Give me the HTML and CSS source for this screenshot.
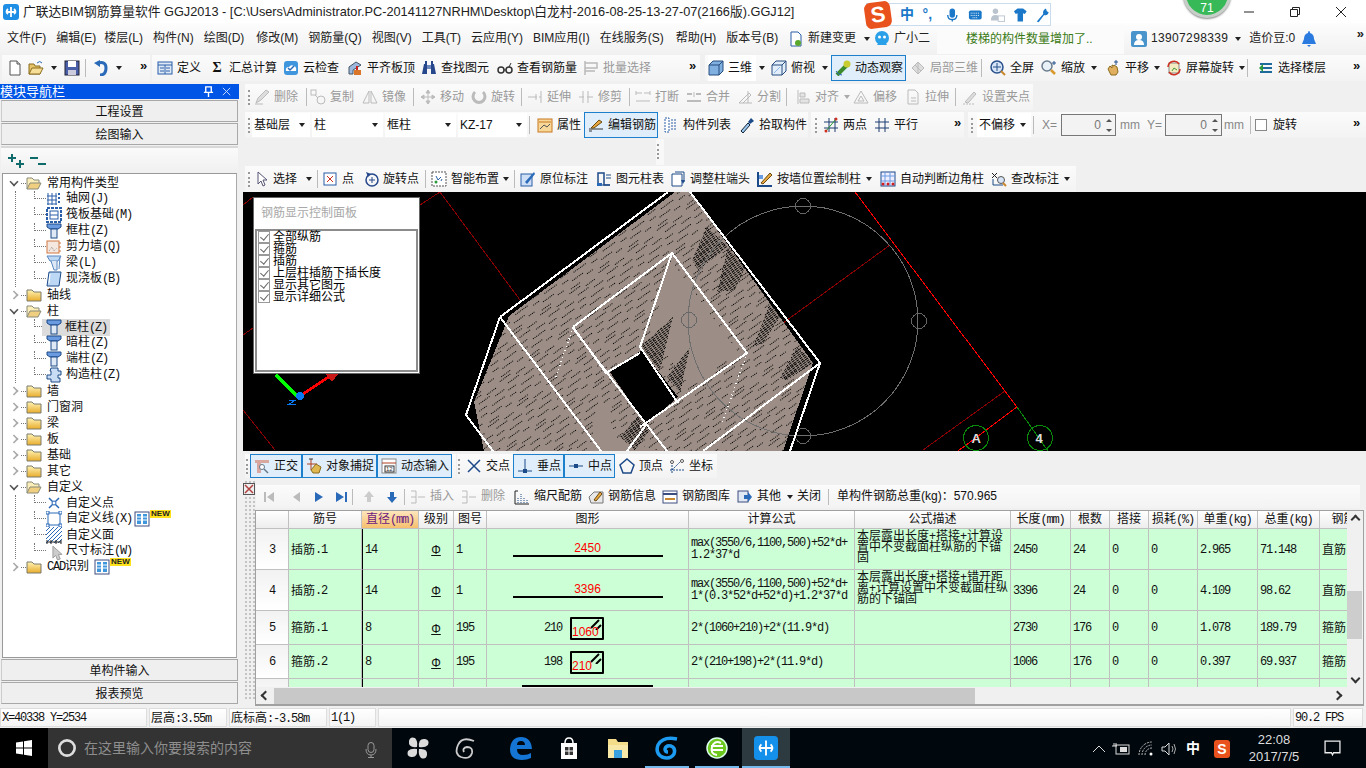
FILE: index.html
```html
<!DOCTYPE html>
<html lang="zh-CN">
<head>
<meta charset="utf-8">
<title>广联达BIM钢筋算量软件 GGJ2013</title>
<link rel="stylesheet" href="styles.css">
</head>
<body>
<svg class="defs" width="0" height="0" aria-hidden="true">
  <defs>
    <linearGradient id="fg" x1="0" y1="0" x2="0" y2="1"><stop offset="0" stop-color="#fff3b4"/><stop offset="1" stop-color="#e8ac2c"/></linearGradient>
    <symbol id="doc" viewBox="0 0 16 16"><path d="M3 1h7l3 3v11H3z" fill="#fff" stroke="#555"/><path d="M10 1v3h3" fill="#ddd" stroke="#555"/></symbol>
    <symbol id="open" viewBox="0 0 16 16"><path d="M1 14V4h5l1 2h5v8z" fill="#e8c468" stroke="#8a6d20"/><path d="M1 14l3-6h11l-3 6z" fill="#f6de96" stroke="#8a6d20"/><path d="M9 3q3-3 5 0" fill="none" stroke="#2a6ab8"/></symbol>
    <symbol id="save" viewBox="0 0 16 16"><rect x="1" y="1" width="14" height="14" fill="#4a5fa8" stroke="#223"/><rect x="4" y="1" width="8" height="6" fill="#fff"/><rect x="4" y="10" width="8" height="5" fill="#ccd"/></symbol>
    <symbol id="undo" viewBox="0 0 16 16"><path d="M5 3q8-2 8 5t-6 7" fill="none" stroke="#2a6ab8" stroke-width="3"/><path d="M1 3l6-3v7z" fill="#2a6ab8"/></symbol>
    <symbol id="def" viewBox="0 0 16 16"><rect x="1" y="2" width="14" height="12" fill="#dfe9f6" stroke="#2a5ea8"/><path d="M1 5h14M3 8h4M3 11h4M9 8h4M9 11h4M8 5v9" stroke="#2a5ea8"/></symbol>
    <symbol id="cloud" viewBox="0 0 16 16"><rect x="1" y="1" width="14" height="14" rx="3" fill="#3f96dc"/><path d="M3 11q-1-4 3-4q2-3 5-1q3 1 2 5z" fill="#fff"/><path d="M5 8l2 2 4-4" fill="none" stroke="#2a6ab8" stroke-width="1.5"/></symbol>
    <symbol id="level" viewBox="0 0 16 16"><path d="M2 14V7l7-5 5 3-8 5v4z" fill="#9cb8dc" stroke="#456"/><rect x="7" y="10" width="7" height="5" fill="#d9762a"/><path d="M10 10V6" stroke="#c22" stroke-width="2"/></symbol>
    <symbol id="binoc" viewBox="0 0 16 16"><path d="M1 14l2-10h3v10zM10 14V4h3l2 10z" fill="#26478c"/><rect x="6" y="5" width="4" height="4" fill="#6f89bd"/><rect x="4" y="1" width="2" height="3" fill="#26478c"/><rect x="10" y="1" width="2" height="3" fill="#26478c"/></symbol>
    <symbol id="glasses" viewBox="0 0 16 16"><circle cx="4" cy="10" r="3" fill="none" stroke="#333" stroke-width="1.5"/><circle cx="12" cy="10" r="3" fill="none" stroke="#333" stroke-width="1.5"/><path d="M7 10h2M12 7l2-4" stroke="#333"/></symbol>
    <symbol id="batch" viewBox="0 0 16 16"><path d="M2 1v14M2 3h12v5H2M2 11h10" fill="none" stroke="#b9b9b9" stroke-width="1.5"/></symbol>
    <symbol id="cube" viewBox="0 0 16 16"><path d="M1 5l4-4h10v10l-4 4H1z" fill="#7fb0e0" stroke="#274d7e"/><path d="M1 5h10v10M11 5l4-4" fill="none" stroke="#274d7e"/></symbol>
    <symbol id="cube2" viewBox="0 0 16 16"><path d="M1 5l4-4h10v10l-4 4H1z" fill="#e2eefa" stroke="#274d7e"/><path d="M1 5h10v10M11 5l4-4" fill="none" stroke="#274d7e"/><path d="M3 13l6-6" stroke="#8fb8e8"/></symbol>
    <symbol id="orbit" viewBox="0 0 16 16"><path d="M2 15L12 5" stroke="#3c8a2c" stroke-width="4"/><circle cx="12" cy="4" r="3.5" fill="#c8cc30"/><path d="M1 11q2 4 6 4" fill="none" stroke="#2a6ab8"/></symbol>
    <symbol id="local" viewBox="0 0 16 16"><path d="M2 8l6-6 6 6-6 6z" fill="#ddd" stroke="#bbb"/><path d="M5 5l6 6M8 2v12" stroke="#bbb"/></symbol>
    <symbol id="full" viewBox="0 0 16 16"><circle cx="7" cy="7" r="6" fill="#d6e4f6" stroke="#27508c" stroke-width="1.5"/><path d="M7 3v8M3 7h8" stroke="#27508c"/><path d="M11 11l4 4" stroke="#c8872c" stroke-width="2"/></symbol>
    <symbol id="zoom" viewBox="0 0 16 16"><circle cx="6" cy="6" r="5" fill="#e8f0f8" stroke="#6c7c90" stroke-width="1.5"/><path d="M10 10l4 4" stroke="#d89a2c" stroke-width="2.5"/><path d="M13 1v4M11 3h4" stroke="#27508c"/></symbol>
    <symbol id="pan" viewBox="0 0 16 16"><path d="M3 9l2-3 2 2V5l2 1v-1l3 2 1 5-2 3H6z" fill="#e0b060" stroke="#8a6d20"/><path d="M11 0v5M9 2h4" stroke="#27508c"/></symbol>
    <symbol id="rot" viewBox="0 0 16 16"><rect x="3" y="3" width="10" height="10" fill="#f4ecc0" stroke="#888"/><path d="M2 7a6 6 0 0 1 11-3M14 9a6 6 0 0 1-11 3" fill="none" stroke="#d03020" stroke-width="1.5"/><path d="M6 11l2-3 3 2" stroke="#3a9a3a" fill="none"/></symbol>
    <symbol id="floors" viewBox="0 0 16 16"><path d="M2 4h12M2 8h12M2 12h12" stroke="#1d6a9c" stroke-width="2"/><path d="M1 8l4-4v8z" fill="#2a9a3a"/></symbol>
    <symbol id="del" viewBox="0 0 16 16"><path d="M2 14l2-5 8-8 3 2-8 8z" fill="#ddd" stroke="#bbb"/><path d="M1 15h8" stroke="#bbb"/></symbol>
    <symbol id="copy" viewBox="0 0 16 16"><rect x="1" y="1" width="5" height="5" fill="none" stroke="#bbb"/><circle cx="11" cy="11" r="4" fill="none" stroke="#bbb"/><path d="M5 6l3 3" stroke="#bbb"/></symbol>
    <symbol id="mirror" viewBox="0 0 16 16"><path d="M7 2L1 14h6zM9 2l6 12H9z" fill="none" stroke="#bbb"/></symbol>
    <symbol id="move" viewBox="0 0 16 16"><path d="M8 1v14M1 8h14M8 1L6 4h4zM8 15l-2-3h4zM1 8l3-2v4zM15 8l-3-2v4z" fill="#bbb" stroke="#bbb"/></symbol>
    <symbol id="rotate" viewBox="0 0 16 16"><path d="M4 3a6 6 0 1 0 8 0" fill="none" stroke="#bbb" stroke-width="3"/></symbol>
    <symbol id="extend" viewBox="0 0 16 16"><path d="M1 8h9M12 8h2M14 2v12M9 5v6" stroke="#bbb" fill="none"/></symbol>
    <symbol id="trim" viewBox="0 0 16 16"><path d="M1 8h5M9 8h6M5 2v12M10 2v12" stroke="#bbb" fill="none"/></symbol>
    <symbol id="brk" viewBox="0 0 16 16"><path d="M1 4h6M9 4h6M1 12h14M1 2v4M15 2v4" stroke="#bbb" fill="none"/></symbol>
    <symbol id="merge" viewBox="0 0 16 16"><path d="M1 5h5M10 5h5M1 12h14" stroke="#bbb" stroke-width="2"/><path d="M8 3v5" stroke="#bbb"/></symbol>
    <symbol id="split" viewBox="0 0 16 16"><path d="M2 14h13M2 14l10-10 2 2-8 8M11 2v12" fill="none" stroke="#bbb"/></symbol>
    <symbol id="align" viewBox="0 0 16 16"><path d="M3 1v14M5 4h5v4H5zM5 10h9v4H5z" fill="#e4e4e4" stroke="#bbb"/></symbol>
    <symbol id="offs" viewBox="0 0 16 16"><path d="M1 14L8 2l7 12zM5 12l3-5 3 5z" fill="none" stroke="#bbb"/></symbol>
    <symbol id="stre" viewBox="0 0 16 16"><path d="M3 1h7l3 3v11H3zM6 9h5M6 12h5" fill="none" stroke="#bbb"/></symbol>
    <symbol id="gripset" viewBox="0 0 16 16"><path d="M3 13L12 3l2 2-8 9z" fill="#ddd" stroke="#bbb"/><path d="M1 15h12" stroke="#bbb" stroke-dasharray="2 1"/></symbol>
    <symbol id="attr" viewBox="0 0 16 16"><rect x="1" y="2" width="14" height="13" fill="#f8d898" stroke="#c87820"/><path d="M2 5h12" stroke="#c87820"/><path d="M3 12l4-4 3 2 3-3" fill="none" stroke="#555"/></symbol>
    <symbol id="edit" viewBox="0 0 16 16"><path d="M1 12h14" stroke="#333"/><path d="M3 11l8-8 3 2-8 6z" fill="#e8a840" stroke="#6a4a10"/><path d="M1 14h3" stroke="#333"/></symbol>
    <symbol id="list" viewBox="0 0 16 16"><path d="M2 1h4v14H2zM8 3h6M8 6h6M8 9h6M8 12h6" fill="#fff" stroke="#2a5ea8" stroke-dasharray="2 1"/></symbol>
    <symbol id="pick" viewBox="0 0 16 16"><path d="M2 14L9 6l2 2-7 8z" fill="#9cc8f0" stroke="#123"/><path d="M9 5l3-4 3 3-4 3z" fill="#1d4a88"/></symbol>
    <symbol id="two" viewBox="0 0 16 16"><path d="M6 1v14M12 1v14M1 5h14M1 11h14" stroke="#1c3c70" fill="none"/><path d="M3 14L13 2" stroke="#2a9a3a"/><circle cx="3" cy="14" r="1.5" fill="#d03020"/><circle cx="13" cy="2" r="1.5" fill="#d03020"/></symbol>
    <symbol id="par" viewBox="0 0 16 16"><path d="M5 1v14M11 1v14M1 5h14M1 11h14" stroke="#1c3c70" fill="none"/></symbol>
    <symbol id="cur" viewBox="0 0 16 16"><path d="M5 1v12l3-3 2 5 2-1-2-5h4z" fill="#fff" stroke="#557"/></symbol>
    <symbol id="pt" viewBox="0 0 16 16"><rect x="2" y="2" width="12" height="12" fill="#fff" stroke="#2a5ea8"/><path d="M5 5l6 6M11 5l-6 6" stroke="#d03020"/></symbol>
    <symbol id="rotpt" viewBox="0 0 16 16"><circle cx="9" cy="9" r="6" fill="none" stroke="#26478c" stroke-width="1.5"/><path d="M9 6v6M6 9h6" stroke="#26478c"/><path d="M3 1l2 5 3-3z" fill="#26478c"/></symbol>
    <symbol id="smart" viewBox="0 0 16 16"><rect x="1" y="1" width="14" height="14" fill="#fff" stroke="#555" stroke-dasharray="2 1"/><path d="M5 5l2 4 3-3M10 10l1-2" fill="none" stroke="#2a5ea8"/><circle cx="5" cy="11" r="1.5" fill="#2a9a3a"/></symbol>
    <symbol id="mark" viewBox="0 0 16 16"><rect x="1" y="3" width="11" height="12" fill="#cfe0f6" stroke="#2a5ea8"/><path d="M5 11L14 1l1 2-8 10z" fill="#2a6ab8"/></symbol>
    <symbol id="ctable" viewBox="0 0 16 16"><path d="M2 14V2h6v12h6" fill="none" stroke="#1d4a88" stroke-width="1.5"/><path d="M10 4h5M10 7h5M2 14h12" stroke="#1d4a88"/><rect x="1" y="12" width="5" height="3" fill="#2a6ab8"/></symbol>
    <symbol id="adj" viewBox="0 0 16 16"><path d="M2 3h10v12H2z" fill="#fff" stroke="#1d4a88"/><path d="M5 1h9v10" fill="none" stroke="#1d4a88"/><path d="M15 9l-2 4-2-4z" fill="#1d4a88"/></symbol>
    <symbol id="wall" viewBox="0 0 16 16"><path d="M1 1v14h14" fill="none" stroke="#1d4a88" stroke-width="2"/><path d="M4 12L13 2l2 2-9 9z" fill="#e8a840" stroke="#6a4a10"/><rect x="2" y="4" width="4" height="4" fill="#6a9ae0"/></symbol>
    <symbol id="auto" viewBox="0 0 16 16"><rect x="1" y="1" width="14" height="14" fill="#eef" stroke="#1d4a88"/><path d="M1 5h14M1 10h14M5 1v14M10 1v14" stroke="#6a9ae0"/><circle cx="3" cy="13" r="1.5" fill="#d02020"/><circle cx="13" cy="13" r="1.5" fill="#d02020"/><circle cx="8" cy="13" r="1.5" fill="#d02020"/></symbol>
    <symbol id="chk" viewBox="0 0 16 16"><path d="M1 2l5 5M6 2L1 7" stroke="#222"/><path d="M2 14V8M12 14H2" stroke="#1d4a88"/><circle cx="10" cy="9" r="3.5" fill="#d6e4f6" stroke="#555"/><path d="M12 12l3 3" stroke="#c8872c" stroke-width="2"/></symbol>
    <symbol id="ortho" viewBox="0 0 16 16"><path d="M1 2h14v3H7v10H3V5H1z" fill="#d8a8a0"/><circle cx="8" cy="9" r="2.5" fill="#fff" stroke="#678"/><path d="M10 11l4 4" stroke="#678" stroke-width="1.5"/></symbol>
    <symbol id="obj" viewBox="0 0 16 16"><path d="M5 1v11M1 6h10" stroke="#b04020"/><path d="M3 1h4" stroke="#333"/><path d="M5 12l5-6 5 3-2 6H7z" fill="#e0b850" stroke="#8a6d20"/></symbol>
    <symbol id="dyn" viewBox="0 0 16 16"><rect x="1" y="1" width="14" height="14" fill="#fff" stroke="#888"/><path d="M1 5h14" stroke="#b04020"/><rect x="4" y="8" width="9" height="6" fill="#fff" stroke="#333"/><text x="5" y="13" font-size="6" fill="#333" font-family="Liberation Sans">12</text></symbol>
    <symbol id="cross" viewBox="0 0 16 16"><path d="M2 2l12 12M14 2L2 14" stroke="#1d4a88" stroke-width="1.5"/></symbol>
    <symbol id="perp" viewBox="0 0 16 16"><path d="M1 13h14M8 1v12" stroke="#1d4a88"/><rect x="6" y="11" width="4" height="4" fill="#1d4a88"/></symbol>
    <symbol id="mid" viewBox="0 0 16 16"><path d="M1 8h14" stroke="#1d4a88"/><rect x="6" y="6" width="4" height="4" fill="#1d4a88"/></symbol>
    <symbol id="vert" viewBox="0 0 16 16"><path d="M8 1l7 6-3 8H4L1 7z" fill="none" stroke="#1d4a88" stroke-width="1.5"/></symbol>
    <symbol id="coord" viewBox="0 0 16 16"><path d="M3 15V4M1 12h14M3 12l9-9" stroke="#1d4a88" stroke-dasharray="2 1"/><circle cx="3" cy="4" r="1.5" fill="#fff" stroke="#555"/><circle cx="13" cy="3" r="1.5" fill="#fff" stroke="#555"/></symbol>
    <symbol id="first" viewBox="0 0 16 16"><path d="M3 3h2v10H3zM13 3v10L6 8z" fill="#bbb"/></symbol>
    <symbol id="prev" viewBox="0 0 16 16"><path d="M12 3v10L5 8z" fill="#bbb"/></symbol>
    <symbol id="next" viewBox="0 0 16 16"><path d="M4 3v10l8-5z" fill="#2a6ab8"/></symbol>
    <symbol id="last" viewBox="0 0 16 16"><path d="M2 3v10l8-5zM11 3h2v10h-2z" fill="#2a6ab8"/></symbol>
    <symbol id="up" viewBox="0 0 16 16"><path d="M8 2l5 6h-3v5H6V8H3z" fill="#ccc"/></symbol>
    <symbol id="down" viewBox="0 0 16 16"><path d="M8 14l5-6h-3V3H6v5H3z" fill="#2a6ab8"/></symbol>
    <symbol id="ins" viewBox="0 0 16 16"><path d="M1 2h5M1 8h5M1 14h5M6 2v12M8 8h7" fill="none" stroke="#bbb"/></symbol>
    <symbol id="scale" viewBox="0 0 16 16"><path d="M1 15V2l3 0M1 15h14" fill="none" stroke="#222"/><path d="M4 14V8M7 14V5M10 14V9M13 14V11" stroke="#1d4a88" stroke-dasharray="1 1"/></symbol>
    <symbol id="info" viewBox="0 0 16 16"><path d="M1 8l5-5h9v11H3z" fill="#e8e8e8" stroke="#777"/><path d="M6 11l6-8 2 2-6 7z" fill="#e8a840" stroke="#6a4a10"/></symbol>
    <symbol id="lib" viewBox="0 0 16 16"><rect x="1" y="2" width="14" height="12" fill="#fff" stroke="#3c4c80"/><path d="M1 5h14" stroke="#3c4c80" stroke-width="2"/><path d="M3 10h10" stroke="#c8872c" stroke-width="2"/></symbol>
    <symbol id="other" viewBox="0 0 16 16"><rect x="1" y="2" width="10" height="11" fill="#e0e8f4" stroke="#3c4c80"/><path d="M7 6h4V3l4 5-4 5v-3H7z" fill="#2a6ab8"/></symbol>
    <symbol id="fold" viewBox="0 0 16 16"><path d="M1 14V3h5l2 2h7v9z" fill="url(#fg)" stroke="#7a7a6a"/></symbol>
    <symbol id="foldo" viewBox="0 0 16 16"><path d="M1 14V3h5l2 2h5v3" fill="#fbeeb8" stroke="#8a8a7a"/><path d="M1 14l3-6h11l-3 6z" fill="#f0d080" stroke="#8a8a7a"/></symbol>
    <symbol id="gridi" viewBox="0 0 16 16"><path d="M2 2v12M6 2v12M10 2v12M1 5h10M1 9h10M1 13h10" stroke="#2a5ea8"/><path d="M13 2v12" stroke="#2a5ea8" stroke-dasharray="2 2" stroke-width="2"/></symbol>
    <symbol id="raft" viewBox="0 0 16 16"><rect x="1" y="1" width="14" height="14" fill="none" stroke="#2a5ea8" stroke-width="2" stroke-dasharray="3 1"/><rect x="4" y="4" width="8" height="8" fill="none" stroke="#2a5ea8"/><path d="M4 8h8" stroke="#2a5ea8"/></symbol>
    <symbol id="col" viewBox="0 0 16 16"><path d="M1 1h14v3l-3 2H4L1 4z" fill="#6a9ae0" stroke="#1d4a88"/><rect x="5" y="6" width="6" height="9" fill="#dfe9f6" stroke="#1d4a88"/></symbol>
    <symbol id="shear" viewBox="0 0 16 16"><rect x="1" y="2" width="12" height="12" fill="#f4e8e0" stroke="#d07840"/><path d="M3 12l3-4 2 4 3-3" fill="none" stroke="#999" stroke-dasharray="1 1"/><path d="M13 4h2M13 8h2M13 12h2" stroke="#d07840"/></symbol>
    <symbol id="beam" viewBox="0 0 16 16"><path d="M1 1h14l-3 5H4z" fill="#bcd8f4" stroke="#5a88c0"/><path d="M5 6l3 9h3V6" fill="#dfe9f6" stroke="#5a88c0"/><path d="M14 2l-1 12" stroke="#5a88c0"/></symbol>
    <symbol id="slab" viewBox="0 0 16 16"><path d="M3 1h12l-2 14H1z" fill="#bcd8f4" stroke="#1d4a88"/><path d="M4 3l-1 9" stroke="#fff"/></symbol>
    <symbol id="cons" viewBox="0 0 16 16"><path d="M5 1h7v3h3v4h-3v3h2v4H5v-3H1V8h4V4H4z" fill="#c8dcf4" stroke="#1d4a88"/></symbol>
    <symbol id="xpt" viewBox="0 0 16 16"><path d="M3 3l10 10M13 3L3 13" stroke="#2a6ab8" stroke-width="1.5"/><circle cx="8" cy="8" r="2" fill="#fff" stroke="#2a6ab8"/></symbol>
    <symbol id="xline" viewBox="0 0 16 16"><rect x="2" y="2" width="12" height="12" fill="none" stroke="#2a6ab8"/><rect x="0" y="0" width="3" height="3" fill="#fff" stroke="#2a6ab8"/><rect x="13" y="0" width="3" height="3" fill="#fff" stroke="#2a6ab8"/><rect x="0" y="13" width="3" height="3" fill="#fff" stroke="#2a6ab8"/><rect x="13" y="13" width="3" height="3" fill="#fff" stroke="#2a6ab8"/></symbol>
    <symbol id="xface" viewBox="0 0 16 16"><path d="M0 4L4 0M0 8l8-8M0 12L12 0M0 16L16 0M4 16L16 4M8 16l8-8M12 16l4-4" stroke="#2a6ab8"/></symbol>
    <symbol id="dim" viewBox="0 0 16 16"><path d="M1 1v4M15 1v4M1 3h14" stroke="#222"/><path d="M5 1v4M10 1v4" stroke="#222"/></symbol>
    <symbol id="book" viewBox="0 0 16 16"><rect x="1" y="1" width="14" height="14" fill="#fff" stroke="#3c4c80"/><rect x="3" y="3" width="4" height="10" fill="#3f96dc"/><rect x="9" y="3" width="4" height="10" fill="#3f96dc"/><path d="M3 6h4M3 9h4M9 6h4M9 9h4" stroke="#fff"/></symbol>
    <symbol id="logo" viewBox="0 0 16 16"><rect width="16" height="16" rx="3" fill="#1f8fe6"/><path d="M8 3v10M3 8h10M5 5q-3 3 0 5M11 5q3 3 0 5" fill="none" stroke="#fff" stroke-width="1.8"/></symbol>
  </defs>
</svg>

<div class="app">
  <header class="titlebar">
    <svg class="i logo"><use href="#logo"/></svg>
    <span class="title">广联达BIM钢筋算量软件 GGJ2013 - [C:\Users\Administrator.PC-20141127NRHM\Desktop\白龙村-2016-08-25-13-27-07(2166版).GGJ12]</span>
    <div class="sogou">
      <span class="s-logo">S</span>
      <span class="s-item">中</span>
      <span class="s-item">°,</span>
      <svg class="s-ic" viewBox="0 0 16 16"><rect x="5" y="1" width="6" height="10" rx="3" fill="#1b78c8"/><path d="M3 8q0 5 5 5t5-5M8 13v2" fill="none" stroke="#1b78c8" stroke-width="1.5"/></svg>
      <svg class="s-ic" viewBox="0 0 16 16"><rect x="1" y="3" width="14" height="10" rx="2" fill="#1b78c8"/><path d="M3 6h10M3 8.500h10M5 11h6" stroke="#fff" stroke-dasharray="1 1"/></svg>
      <svg class="s-ic" viewBox="0 0 16 16"><circle cx="6" cy="4" r="3" fill="#bac4cf"/><path d="M1 14q0-6 5-6t4 6z" fill="#bac4cf"/><rect x="9" y="9" width="7" height="6" fill="#fff" stroke="#bac4cf"/></svg>
      <svg class="s-ic" viewBox="0 0 16 16"><path d="M5 1h6l4 3-2 3-2-1v9H5V6L3 7 1 4z" fill="#1b78c8"/></svg>
      <svg class="s-ic" viewBox="0 0 16 16"><path d="M2 15l7-8q-1-4 3-6l1 3 2 1q-1 4-5 3l-6 8z" fill="#1b78c8"/></svg>
    </div>
    <div class="score">71</div>
    <div class="winbtns">
      <svg viewBox="0 0 12 12"><path d="M1 6h10" stroke="#222"/></svg>
      <svg viewBox="0 0 12 12"><path d="M1.500 3.500h7v7h-7zM3.500 3.500v-2h7v7h-2" fill="none" stroke="#222"/></svg>
      <svg viewBox="0 0 12 12"><path d="M1 1l10 10M11 1L1 11" stroke="#222"/></svg>
    </div>
  </header>

  <nav class="menubar">
    <div class="menus">
      <span>文件(F)</span><span>编辑(E)</span><span>楼层(L)</span><span>构件(N)</span><span>绘图(D)</span><span>修改(M)</span><span>钢筋量(Q)</span><span>视图(V)</span><span>工具(T)</span><span>云应用(Y)</span><span>BIM应用(I)</span><span>在线服务(S)</span><span>帮助(H)</span><span>版本号(B)</span>
    </div>
    <div class="t m-new"><svg class="i" viewBox="0 0 16 16"><path d="M3 1h7l3 3v11H3z" fill="#fff" stroke="#2a5ea8"/><circle cx="10" cy="12" r="3" fill="#5aa82c"/></svg>新建变更<i class="ar"></i></div>
    <div class="t m-xiao"><svg class="i" viewBox="0 0 16 16"><circle cx="8" cy="7" r="7" fill="#2aa0e8"/><circle cx="5.500" cy="6" r="1.500" fill="#fff"/><circle cx="10.500" cy="6" r="1.500" fill="#fff"/><path d="M3 14l2-3h6l2 3z" fill="#2aa0e8"/></svg>广小二</div>
    <div class="m-news">楼梯的构件数量增加了..</div>
    <div class="m-user">
      <svg class="i" viewBox="0 0 16 16"><rect width="16" height="16" rx="2" fill="#4a94cc"/><circle cx="8" cy="6" r="3" fill="#fff"/><path d="M3 14q0-5 5-5t5 5z" fill="#fff"/></svg>
      <span class="phone">13907298339</span><i class="ar"></i><span class="dou">造价豆:0</span>
      <svg class="i bell" viewBox="0 0 16 16"><path d="M8 0q-1 0-1 2-4 1-4 6l-2 5h14l-2-5q0-5-4-6 0-2-1-2zM6 14h4l-2 2z" fill="#2a7ae0"/></svg>
    </div>
    <span class="more m-more">»</span>
  </nav>

  <div class="toolrow">
    <div class="bar bar-a">
      <span class="t"><svg class="i"><use href="#doc"/></svg></span>
      <span class="t"><svg class="i"><use href="#open"/></svg></span>
      <i class="ar"></i>
      <span class="t"><svg class="i"><use href="#save"/></svg></span>
      <i class="sp"></i>
      <span class="t"><svg class="i"><use href="#undo"/></svg></span>
      <i class="ar"></i>
      <span class="more up">»</span>
    </div>
    <div class="bar bar-b">
      <span class="t"><svg class="i"><use href="#def"/></svg>定义</span>
      <span class="t"><b class="sigma">Σ</b>汇总计算</span>
      <span class="t"><svg class="i"><use href="#cloud"/></svg>云检查</span>
      <span class="t"><svg class="i"><use href="#level"/></svg>平齐板顶</span>
      <span class="t"><svg class="i"><use href="#binoc"/></svg>查找图元</span>
      <span class="t"><svg class="i"><use href="#glasses"/></svg>查看钢筋量</span>
      <span class="t off"><svg class="i"><use href="#batch"/></svg>批量选择</span>
      <span></span>
      <span class="more up">»</span>
    </div>
    <div class="bar bar-c">
      <span class="t wt"><svg class="i"><use href="#cube"/></svg>三维</span>
      <i class="ar"></i>
      <span class="t"><svg class="i"><use href="#cube2"/></svg>俯视</span>
      <i class="ar"></i>
      <span class="t hl"><svg class="i"><use href="#orbit"/></svg>动态观察</span>
      <span class="t off pl4"><svg class="i"><use href="#local"/></svg>局部三维</span>
      <i class="sp"></i>
      <span class="t"><svg class="i"><use href="#full"/></svg>全屏</span>
      <span class="t"><svg class="i"><use href="#zoom"/></svg>缩放</span>
      <i class="ar"></i>
      <span class="t"><svg class="i"><use href="#pan"/></svg>平移</span>
      <i class="ar"></i>
      <span class="t"><svg class="i"><use href="#rot"/></svg>屏幕旋转</span>
      <i class="ar"></i>
      <i class="sp"></i>
      <span class="t"><svg class="i"><use href="#floors"/></svg>选择楼层</span>
      <span></span>
      <span class="more up">»</span>
    </div>
  </div>

  <main class="main">
    <aside class="nav">
      <div class="nav-head"><span>模块导航栏</span>
        <svg class="nav-ic" viewBox="0 0 12 12"><path d="M3 1h6v6H3zM1 7h10M6 7v5" fill="none" stroke="#fff" stroke-width="1.500"/></svg>
        <svg class="nav-ic" viewBox="0 0 12 12"><path d="M2 2l8 8M10 2l-8 8" stroke="#cfe0ff"/></svg>
      </div>
      <div class="nav-btn">工程设置</div>
      <div class="nav-btn">绘图输入</div>
      <div class="nav-panel">
        <div class="nav-tools">
          <svg class="pm" viewBox="0 0 18 16"><path d="M5 1v8M1 5h8M13 7v8M9 11h8" stroke="#0f6a6a" stroke-width="2"/></svg>
          <svg class="pm" viewBox="0 0 18 16"><path d="M1 5h8M9 11h8" stroke="#0f6a6a" stroke-width="2"/></svg>
        </div>
        <div class="tree">
          <div class="grp"><i class="chev dn"></i><i class="stub"></i><svg class="i"><use href="#foldo"/></svg><span>常用构件类型</span></div>
          <div class="kids">
            <div class="kid"><i class="elbow"></i><svg class="i"><use href="#gridi"/></svg><span>轴网<span class="m">(J)</span></span></div>
            <div class="kid"><i class="elbow"></i><svg class="i"><use href="#raft"/></svg><span>筏板基础<span class="m">(M)</span></span></div>
            <div class="kid"><i class="elbow"></i><svg class="i"><use href="#col"/></svg><span>框柱<span class="m">(Z)</span></span></div>
            <div class="kid"><i class="elbow"></i><svg class="i"><use href="#shear"/></svg><span>剪力墙<span class="m">(Q)</span></span></div>
            <div class="kid"><i class="elbow"></i><svg class="i"><use href="#beam"/></svg><span>梁<span class="m">(L)</span></span></div>
            <div class="kid"><i class="elbow"></i><svg class="i"><use href="#slab"/></svg><span>现浇板<span class="m">(B)</span></span></div>
          </div>
          <div class="grp"><i class="chev"></i><i class="stub"></i><svg class="i"><use href="#fold"/></svg><span>轴线</span></div>
          <div class="grp"><i class="chev dn"></i><i class="stub"></i><svg class="i"><use href="#foldo"/></svg><span>柱</span></div>
          <div class="kids">
            <div class="kid"><i class="elbow"></i><svg class="i"><use href="#col"/></svg><span class="sel">框柱<span class="m">(Z)</span></span></div>
            <div class="kid"><i class="elbow"></i><svg class="i"><use href="#col"/></svg><span>暗柱<span class="m">(Z)</span></span></div>
            <div class="kid"><i class="elbow"></i><svg class="i"><use href="#col"/></svg><span>端柱<span class="m">(Z)</span></span></div>
            <div class="kid"><i class="elbow"></i><svg class="i"><use href="#cons"/></svg><span>构造柱<span class="m">(Z)</span></span></div>
          </div>
          <div class="grp"><i class="chev"></i><i class="stub"></i><svg class="i"><use href="#fold"/></svg><span>墙</span></div>
          <div class="grp"><i class="chev"></i><i class="stub"></i><svg class="i"><use href="#fold"/></svg><span>门窗洞</span></div>
          <div class="grp"><i class="chev"></i><i class="stub"></i><svg class="i"><use href="#fold"/></svg><span>梁</span></div>
          <div class="grp"><i class="chev"></i><i class="stub"></i><svg class="i"><use href="#fold"/></svg><span>板</span></div>
          <div class="grp"><i class="chev"></i><i class="stub"></i><svg class="i"><use href="#fold"/></svg><span>基础</span></div>
          <div class="grp"><i class="chev"></i><i class="stub"></i><svg class="i"><use href="#fold"/></svg><span>其它</span></div>
          <div class="grp"><i class="chev dn"></i><i class="stub"></i><svg class="i"><use href="#foldo"/></svg><span>自定义</span></div>
          <div class="kids">
            <div class="kid"><i class="elbow"></i><svg class="i"><use href="#xpt"/></svg><span>自定义点</span></div>
            <div class="kid"><i class="elbow"></i><svg class="i"><use href="#xline"/></svg><span>自定义线<span class="m">(X)</span></span><svg class="i bk"><use href="#book"/></svg><b class="new">NEW</b></div>
            <div class="kid"><i class="elbow"></i><svg class="i"><use href="#xface"/></svg><span>自定义面</span></div>
            <div class="kid"><i class="elbow"></i><svg class="i dimi"><use href="#dim"/></svg><span>尺寸标注<span class="m">(W)</span></span><svg class="mouse" viewBox="0 0 12 16"><path d="M1 0v13l3-3 2 5 3-1-2-5h4z" fill="#ccc" stroke="#999"/></svg></div>
          </div>
          <div class="grp"><i class="chev"></i><i class="stub"></i><svg class="i"><use href="#fold"/></svg><span><span class="m">CAD</span>识别</span><svg class="i bk2"><use href="#book"/></svg><b class="new">NEW</b></div>
        </div>
      </div>
      <div class="nav-btn">单构件输入</div>
      <div class="nav-btn">报表预览</div>
    </aside>

    <section class="work">
      <div class="barrow lower">
        <div class="bar bar-edit off">
          <i class="g"></i>
          <span class="t"><svg class="i"><use href="#del"/></svg>删除</span>
          <i class="sp"></i>
          <span class="t"><svg class="i"><use href="#copy"/></svg>复制</span>
          <span class="t"><svg class="i"><use href="#mirror"/></svg>镜像</span>
          <i class="sp"></i>
          <span class="t"><svg class="i"><use href="#move"/></svg>移动</span>
          <span class="t"><svg class="i"><use href="#rotate"/></svg>旋转</span>
          <i class="sp"></i>
          <span class="t"><svg class="i"><use href="#extend"/></svg>延伸</span>
          <span class="t"><svg class="i"><use href="#trim"/></svg>修剪</span>
          <i class="sp"></i>
          <span class="t"><svg class="i"><use href="#brk"/></svg>打断</span>
          <span class="t"><svg class="i"><use href="#merge"/></svg>合并</span>
          <span class="t"><svg class="i"><use href="#split"/></svg>分割</span>
          <i class="sp"></i>
          <span class="t"><svg class="i"><use href="#align"/></svg>对齐</span>
          <i class="ar gray"></i>
          <span class="t"><svg class="i"><use href="#offs"/></svg>偏移</span>
          <span class="t"><svg class="i"><use href="#stre"/></svg>拉伸</span>
          <i class="sp"></i>
          <span class="t"><svg class="i"><use href="#gripset"/></svg>设置夹点</span>
        </div>
      </div>
      <div class="barrow lower">
        <div class="bar bar-sel1">
          <i class="g"></i>
          <span class="combo">基础层<i class="ar"></i></span>
          <span class="combo">柱<i class="ar"></i></span>
          <span class="combo">框柱<i class="ar"></i></span>
          <span class="combo">KZ-17<i class="ar"></i></span>
          <i class="sp"></i>
          <span class="t"><svg class="i"><use href="#attr"/></svg>属性</span>
          <span class="t hl"><svg class="i"><use href="#edit"/></svg>编辑钢筋</span>
          <span class="t pl5"><svg class="i"><use href="#list"/></svg>构件列表</span>
          <span class="t pl5"><svg class="i"><use href="#pick"/></svg>拾取构件</span>
        </div>
        <div class="bar bar-sel2">
          <i class="g"></i>
          <span class="t"><svg class="i"><use href="#two"/></svg>两点</span>
          <span class="t"><svg class="i"><use href="#par"/></svg>平行</span>
          <span></span>
          <span class="more up">»</span>
        </div>
        <div class="bar bar-sel3">
          <i class="g"></i>
          <span class="combo">不偏移<i class="ar"></i></span>
          <i class="sp"></i>
          <span class="lab">X=</span>
          <span class="spin">0<i class="spinb"><i class="tri-u"></i><i class="tri-d"></i></i></span>
          <span class="lab pl3">mm</span>
          <span class="lab">Y=</span>
          <span class="spin">0<i class="spinb"><i class="tri-u"></i><i class="tri-d"></i></i></span>
          <span class="lab pl1">mm</span>
          <i class="sp"></i>
          <i class="cbx"></i>
          <span>旋转</span>
          <span class="more up">»</span>
        </div>
      </div>
      <div class="barrow3"><div class="tiny"><i class="g"></i></div></div>
      <div class="barrow">
        <div class="bar bar-draw">
          <i class="g"></i>
          <span class="t"><svg class="i"><use href="#cur"/></svg>选择</span>
          <i class="ar"></i>
          <i class="sp"></i>
          <span class="t"><svg class="i"><use href="#pt"/></svg>点</span>
          <span class="t"><svg class="i"><use href="#rotpt"/></svg>旋转点</span>
          <i class="sp"></i>
          <span class="t"><svg class="i"><use href="#smart"/></svg>智能布置</span>
          <i class="ar"></i>
          <i class="sp"></i>
          <span class="t"><svg class="i"><use href="#mark"/></svg>原位标注</span>
          <span class="t"><svg class="i"><use href="#ctable"/></svg>图元柱表</span>
          <span class="t"><svg class="i"><use href="#adj"/></svg>调整柱端头</span>
          <span class="t"><svg class="i"><use href="#wall"/></svg>按墙位置绘制柱</span>
          <i class="ar"></i>
          <span class="t"><svg class="i"><use href="#auto"/></svg>自动判断边角柱</span>
          <span class="t"><svg class="i"><use href="#chk"/></svg>查改标注</span>
          <i class="ar"></i>
        </div>
      </div>

      <div class="canvas">
        <svg class="scene" viewBox="243 192 1123 259" width="1123" height="259">
          <defs>
            <pattern id="sparse" width="36" height="30" patternUnits="userSpaceOnUse" patternTransform="rotate(-36)">
              <path d="M0 2.500H14M18 5.500H30M6 8.500H20M24 11.500H36M2 14.500H12M16 17.500H32M0 20.500H8M10 23.500H24M26 26.500H34M4 29.500H16" stroke="#000" stroke-dasharray="1 1" fill="none"/>
            </pattern>
            <pattern id="dense" width="4" height="2" patternUnits="userSpaceOnUse" patternTransform="rotate(-36)">
              <rect width="3" height="1" fill="#000"/>
            </pattern>
            <pattern id="mid" width="24" height="12" patternUnits="userSpaceOnUse" patternTransform="rotate(-36)">
              <path d="M0 1.500H20M2 3.500H18M6 5.500H24M0 7.500H12M8 9.500H22M0 11.500H16" stroke="#000" stroke-dasharray="1 1" fill="none"/>
            </pattern>
          </defs>
          <g class="red-d">
            <path d="M243 205L253 197M243 335L253 328M243 410L275 450M420 205L440 192L520 300M757 342L890 245M1005 391L923 450"/>
          </g>
          <path class="tan" d="M509 316L675 192H690L813 363L783 451H484L474 402L505 326Z"/>
          <path class="h-sparse" d="M509 316L675 192H690L813 363L783 451H484L474 402L505 326Z"/>
          <path class="tan" d="M672 262L738 352L692 386L650 335ZM600 395L618 440L660 451H590Z"/>
          <path class="h-mid" d="M520 312L620 238L650 250L560 325ZM630 226L672 195L680 235L645 265ZM590 262L620 240L628 280L600 300Z"/>
          <path class="h-dense" d="M692 260L707 227L728 247L698 270ZM717 292L728 247L745 268L735 290ZM753 347L770 303L780 317L763 343ZM780 378L797 347L813 363L787 380ZM667 377L690 347L680 393ZM640 347L673 317L660 370ZM620 437L643 410L650 430L635 450Z"/>
          <path class="hole" d="M610 372L642 350L678 397L646 425Z"/>
          <path class="ln-grey" d="M918 321A115 115 0 1 1 688 321A115 115 0 1 1 918 321Z"/>
          <circle class="ln-grey2" cx="803" cy="206" r="7.500"/><circle class="ln-grey2" cx="919" cy="321" r="7.500"/><circle class="ln-grey2" cx="803" cy="436" r="7.500"/><circle class="ln-grey2" cx="689" cy="320" r="7.500"/>
          <path class="ln-w" d="M500 317L668 192M690 192L820 363L790 451M500 317L466 415L493 451M500 317L601 451M573 327L672 253L747 353L640 427M573 328L643 420L667 451M672 253L640 347L678 403M820 363L703 451M573 327L606 373L640 353M646 425L627 451"/>
          <path class="ln-wd" d="M573 327L556 377M747 353L722 423"/>
          <path class="ln-r" d="M855 192L1017 407L958 451"/>
          <path class="ln-g" d="M1017 407L1048 451"/>
          <circle class="ln-g" cx="976" cy="438" r="12.500"/><circle class="ln-g" cx="1040" cy="438" r="12.500"/>
          <text class="ax" x="971.500" y="443">A</text><text class="ax" x="1035.500" y="443">4</text>
          <path class="axg" d="M276 375L298 397"/>
          <path class="axr" d="M300 396L330 376"/>
          <path d="M338 374L326 374L332 382Z" fill="#c81818"/>
          <circle cx="300" cy="396" r="4" fill="#0a78f0"/>
          <path class="axz" d="M289 400H296L289 404H296"/>
        </svg>
        <div class="rebar-panel">
          <div class="rp-title">钢筋显示控制面板</div>
          <div class="rp-list">
            <div class="rp-row"><i class="ck"></i>全部纵筋</div>
            <div class="rp-row"><i class="ck"></i>箍筋</div>
            <div class="rp-row"><i class="ck"></i>插筋</div>
            <div class="rp-row"><i class="ck"></i>上层柱插筋下插长度</div>
            <div class="rp-row"><i class="ck"></i>显示其它图元</div>
            <div class="rp-row"><i class="ck"></i>显示详细公式</div>
          </div>
        </div>
      </div>

      <div class="snaprow">
        <div class="bar bar-snap1">
          <i class="g"></i>
          <span class="t hl"><svg class="i"><use href="#ortho"/></svg>正交</span>
          <span class="t hl"><svg class="i"><use href="#obj"/></svg>对象捕捉</span>
          <span class="t hl"><svg class="i"><use href="#dyn"/></svg>动态输入</span>
        </div>
        <div class="bar bar-snap2">
          <i class="g"></i>
          <span class="t pl4"><svg class="i"><use href="#cross"/></svg>交点</span>
          <span class="t hl"><svg class="i"><use href="#perp"/></svg>垂点</span>
          <span class="t hl"><svg class="i"><use href="#mid"/></svg>中点</span>
          <span class="t pl4"><svg class="i"><use href="#vert"/></svg>顶点</span>
          <span class="t pl4"><svg class="i"><use href="#coord"/></svg>坐标</span>
        </div>
      </div>

      <div class="tablearea">
        <div class="strip">
          <svg class="closex" viewBox="0 0 12 12"><rect x=".5" y=".5" width="11" height="11" fill="#eee" stroke="#555"/><path d="M2 2l8 8M10 2l-8 8" stroke="#b04040" stroke-width="1.500"/></svg>
        </div>
        <div class="tablecol">
          <div class="bar bar-table">
            <span class="t off"><svg class="i"><use href="#first"/></svg></span>
            <span class="t off"><svg class="i"><use href="#prev"/></svg></span>
            <span class="t"><svg class="i"><use href="#next"/></svg></span>
            <span class="t"><svg class="i"><use href="#last"/></svg></span>
            <i class="sp"></i>
            <span class="t"><svg class="i"><use href="#up"/></svg></span>
            <span class="t"><svg class="i"><use href="#down"/></svg></span>
            <i class="sp"></i>
            <span class="t off"><svg class="i"><use href="#ins"/></svg>插入</span>
            <span class="t off"><svg class="i"><use href="#ins"/></svg>删除</span>
            <span class="t"><svg class="i"><use href="#scale"/></svg>缩尺配筋</span>
            <span class="t"><svg class="i"><use href="#info"/></svg>钢筋信息</span>
            <span class="t"><svg class="i"><use href="#lib"/></svg>钢筋图库</span>
            <span class="t"><svg class="i"><use href="#other"/></svg>其他</span>
            <i class="ar"></i>
            <span>关闭</span>
            <i class="sp"></i>
            <span>单构件钢筋总重(kg)：570.965</span>
          </div>
          <div class="tbox">
            <div class="tview">
              <div class="tgrid">
                <div class="hc"></div><div class="hc">筋号</div><div class="hc act">直径<span class="m">(mm)</span></div><div class="hc">级别</div><div class="hc">图号</div><div class="hc">图形</div><div class="hc">计算公式</div><div class="hc">公式描述</div><div class="hc">长度<span class="m">(mm)</span></div><div class="hc">根数</div><div class="hc">搭接</div><div class="hc">损耗<span class="m">(%)</span></div><div class="hc">单重<span class="m">(kg)</span></div><div class="hc">总重<span class="m">(kg)</span></div><div class="hc">钢筋归类</div>

                <div class="rh m">3</div><div class="c">插筋<span class="m">.1</span></div><div class="c dia m">14</div><div class="c ctr"><span class="lvl">Φ</span></div><div class="c m">1</div>
                <div class="c fig"><span class="fig-n">2450</span><i class="fig-l"></i></div>
                <div class="c f m"><span>max(3550/6,1100,500)+52*d+<br>1.2*37*d</span></div>
                <div class="c d">本层露出长度+搭接+计算设<br>置中不变截面柱纵筋的下锚<br>固</div>
                <div class="c m">2450</div><div class="c m">24</div><div class="c m">0</div><div class="c m">0</div><div class="c m">2.965</div><div class="c m">71.148</div><div class="c">直筋</div>

                <div class="rh m">4</div><div class="c">插筋<span class="m">.2</span></div><div class="c dia m">14</div><div class="c ctr"><span class="lvl">Φ</span></div><div class="c m">1</div>
                <div class="c fig"><span class="fig-n">3396</span><i class="fig-l"></i></div>
                <div class="c f m"><span>max(3550/6,1100,500)+52*d+<br>1*(0.3*52*d+52*d)+1.2*37*d</span></div>
                <div class="c d">本层露出长度+搭接+错开距<br>离+计算设置中不变截面柱纵<br>筋的下锚固</div>
                <div class="c m">3396</div><div class="c m">24</div><div class="c m">0</div><div class="c m">0</div><div class="c m">4.109</div><div class="c m">98.62</div><div class="c">直筋</div>

                <div class="rh m">5</div><div class="c">箍筋<span class="m">.1</span></div><div class="c dia m">8</div><div class="c ctr"><span class="lvl">Φ</span></div><div class="c m">195</div>
                <div class="c fig2"><span class="m">210</span><div class="hoop"><svg viewBox="0 0 14 11"><path d="M3 9l8-8M8 11l5-5" stroke="#000" stroke-width="2"/></svg><span class="hoop-n">1060</span></div></div>
                <div class="c f m"><span>2*(1060+210)+2*(11.9*d)</span></div>
                <div class="c d"></div>
                <div class="c m">2730</div><div class="c m">176</div><div class="c m">0</div><div class="c m">0</div><div class="c m">1.078</div><div class="c m">189.79</div><div class="c">箍筋</div>

                <div class="rh m">6</div><div class="c">箍筋<span class="m">.2</span></div><div class="c dia m">8</div><div class="c ctr"><span class="lvl">Φ</span></div><div class="c m">195</div>
                <div class="c fig2"><span class="m">198</span><div class="hoop"><svg viewBox="0 0 14 11"><path d="M3 9l8-8M8 11l5-5" stroke="#000" stroke-width="2"/></svg><span class="hoop-n">210</span></div></div>
                <div class="c f m"><span>2*(210+198)+2*(11.9*d)</span></div>
                <div class="c d"></div>
                <div class="c m">1006</div><div class="c m">176</div><div class="c m">0</div><div class="c m">0</div><div class="c m">0.397</div><div class="c m">69.937</div><div class="c">箍筋</div>

                <div class="rh"></div><div class="c"></div><div class="c dia"></div><div class="c"></div><div class="c"></div>
                <div class="c figtop"><i class="fig-t"></i></div>
                <div class="c"></div><div class="c"></div><div class="c"></div><div class="c"></div><div class="c"></div><div class="c"></div><div class="c"></div><div class="c"></div><div class="c"></div>
              </div>
            </div>
            <div class="vscroll">
              <i class="sa sa-u"></i>
              <div class="vtrack"><div class="vthumb"></div></div>
              <i class="sa sa-d"></i>
            </div>
            <div class="hscroll">
              <i class="sa sa-l"></i>
              <div class="htrack"><div class="hthumb"></div></div>
              <i class="sa sa-r"></i>
            </div>
            <div class="corner"></div>
          </div>
        </div>
      </div>
    </section>
  </main>

  <footer class="status">
    <div class="st st1 m">X=40338 Y=2534</div>
    <div class="st st2">层高<span class="m">:3.55m</span></div>
    <div class="st st3">底标高<span class="m">:-3.58m</span></div>
    <div class="st st4 m">1(1)</div>
    <div class="st st5"></div>
    <div class="st st6 m">90.2 FPS</div>
  </footer>

  <div class="taskbar">
    <div class="start"><svg viewBox="0 0 16 16" class="win"><path d="M0 2.500l7-1v6H0zM8 1.300L16 0v7.500H8zM0 8.500h7v6l-7-1zM8 8.500h8V16L8 14.700z" fill="#fff"/></svg></div>
    <div class="search">
      <i class="cortana"></i>
      <span class="ph">在这里输入你要搜索的内容</span>
      <svg class="micro" viewBox="0 0 16 16"><rect x="5" y="0.500" width="6" height="10" rx="3" fill="none" stroke="#999"/><path d="M3 7q0 6 5 6t5-6M8 13v2M5 15.500h6" fill="none" stroke="#999"/></svg>
    </div>
    <div class="apps">
      <span class="app-i"><svg viewBox="0 0 24 24"><path d="M11 11Q2 12 3 5q1-5 6-3 3 3 2 9zM13 11Q12 2 19 3q5 1 3 6-3 3-9 2zM13 13q9-1 8 6-1 5-6 3-3-3-2-9zM11 13q1 9-6 8-5-1-3-6 3-3 9-2z" fill="#dcdcdc"/></svg></span>
      <span class="app-i app-sp"><svg viewBox="0 0 24 24"><path d="M20 5Q8 0 4 9t3 12q9 3 11-4 1-6-5-6-5 1-3 5" fill="none" stroke="#ccc" stroke-width="1.800"/></svg></span>
      <span class="app-i"><svg viewBox="0 0 24 24"><path d="M12 1q10 0 11 12H8q0 6 6 6 5 0 8-2v5q-4 2-9 2Q1 24 1 13 2 1 12 1zm-4 8h8q0-4-4-4t-4 4z" fill="#1475d4"/></svg></span>
      <span class="app-i"><svg viewBox="0 0 24 24"><path d="M4 7h16v16H4z" fill="#fff"/><path d="M8 7q0-5 4-5t4 5" fill="none" stroke="#fff" stroke-width="1.500"/><path d="M8 11h3.500v3.500H8zM12.500 11H16v3.500h-3.500zM8 15.500h3.500V19H8zM12.500 15.500H16V19h-3.500z" fill="#333"/></svg></span>
      <span class="app-i"><svg viewBox="0 0 24 24"><path d="M2 3h8l2 3h10v16H2z" fill="#f3dc8a"/><rect x="2" y="9" width="20" height="13" fill="#f8e9a8"/><rect x="8" y="14" width="8" height="8" fill="#3aa0e0"/></svg></span>
      <span class="app-i open"><svg viewBox="0 0 24 24"><path d="M22 3Q8 0 3 9q-3 8 4 12 8 3 12-3 2-6-3-8-5-1-6 3 0 3 3 3" fill="none" stroke="#1d9bf0" stroke-width="3.500"/></svg></span>
      <span class="app-i open"><svg viewBox="0 0 24 24"><circle cx="12" cy="12" r="10" fill="#6cc81c" stroke="#dfe" stroke-width="1.500"/><path d="M6 10h12M6 14h12" stroke="#fff" stroke-width="2"/><path d="M16 7q-7-3-9 4t5 8" fill="none" stroke="#fff" stroke-width="2"/></svg></span>
      <span class="app-i open cur-app"><svg viewBox="0 0 26 26"><rect width="26" height="26" rx="4" fill="#1590ea"/><path d="M13 5v16M6 13h14M8 9q-4 4 0 8M18 9q4 4 0 8" fill="none" stroke="#fff" stroke-width="2"/></svg></span>
    </div>
    <div class="tray">
      <svg class="tr t1" viewBox="0 0 14 8"><path d="M1 7l6-6 6 6" fill="none" stroke="#ddd"/></svg>
      <svg class="tr t2" viewBox="0 0 18 14"><rect x="4" y="3" width="13" height="9" fill="none" stroke="#ddd"/><rect x="8" y="5" width="7" height="5" fill="#ddd"/><path d="M0 4h5M2 1v3M4 1v3" stroke="#ddd"/></svg>
      <svg class="tr t3" viewBox="0 0 16 16"><path d="M1 14A13 13 0 0 1 14 1M4 14A10 10 0 0 1 14 4M7 14A7 7 0 0 1 14 7" fill="none" stroke="#bbb" stroke-dasharray="2 1"/><circle cx="13" cy="13" r="1.500" fill="#fff"/></svg>
      <svg class="tr t4" viewBox="0 0 16 16"><path d="M1 6h3l4-4v12l-4-4H1z" fill="none" stroke="#ddd"/><path d="M11 5q2 3 0 6M13 3q3 5 0 10" fill="none" stroke="#aaa"/></svg>
      <span class="tr-zh">中</span>
      <span class="tr-s">S</span>
      <div class="clock"><span>22:08</span><span>2017/7/5</span></div>
      <svg class="tr t5" viewBox="0 0 16 16"><path d="M1 1h14v11H9l-1 2-1-2H1z" fill="none" stroke="#eee" stroke-width="1.200"/></svg>
    </div>
  </div>
</div>
</body>
</html>
```

FILE: styles.css
```css
*{box-sizing:border-box}
html,body{margin:0;padding:0;width:1366px;height:768px;overflow:hidden}
body{background:#f0f0f0;color:#111;font:12px/1.2 "Liberation Sans","Noto Sans CJK SC",sans-serif}
i{font-style:normal;display:block}
.defs{position:absolute}
.app{display:grid;grid-template-rows:23px 31px 28px 625px 21px 40px;height:768px}
.m{font-family:"Liberation Mono","Noto Sans CJK SC",monospace;letter-spacing:-1.2px}
.i{width:16px;height:16px;flex:none;display:block}

/* title */
.titlebar{position:relative;background:#fff;display:flex;align-items:center;padding-left:3px;z-index:3}
.logo{margin-right:4px}
.title{font-size:12.75px;white-space:nowrap;color:#222}
.sogou{position:absolute;left:866px;top:3px;width:185px;height:23px;background:#fff;border:1px solid #c8dcee;display:flex;align-items:center;gap:8px;padding-left:33px}
.s-logo{position:absolute;left:-2px;top:-2px;width:26px;height:26px;border-radius:6px;background:#e9521c;color:#fff;font:bold 22px/26px "Liberation Sans";text-align:center;transform:rotate(-8deg)}
.s-item{color:#1b78c8;font-weight:bold;font-size:14px;width:16px}
.s-ic{width:16px;height:16px}
.score{position:absolute;left:1183px;top:-30px;width:48px;height:48px;border-radius:50%;background:#37b958;border:3px solid #c8cfc8;color:#fff;text-align:center;padding-top:28px;font-size:12px;box-shadow:0 1px 2px #888}
.winbtns{position:absolute;right:0;top:6px;display:flex;gap:34px;padding-right:19px}
.winbtns svg{width:12px;height:12px}

/* menu */
.menubar{position:relative;display:flex;align-items:center;background:linear-gradient(#fdfdfd,#f1f1f1);padding-left:7px;white-space:nowrap;color:#222}
.menus{display:flex;gap:10px;width:781px;flex:none}
.menus span:nth-child(3),.menus span:nth-child(4),.menus span:nth-child(5){position:relative;left:-2px}
.menus span:nth-child(13),.menus span:nth-child(14){position:relative;left:2px}
.t{display:flex;align-items:center;gap:4px;white-space:nowrap;height:100%}
.m-new{width:86px;flex:none;height:auto}
.m-xiao{width:63px;flex:none;height:auto;gap:4px}
.m-news{width:187px;flex:none;align-self:stretch;margin-top:2px;background:#fbfbfb;padding:7px 0 0 29px;color:#3a7a14;font-size:12px}
.m-user{display:flex;align-items:center;gap:4px;margin-left:7px;width:210px;flex:none}
.phone{letter-spacing:.35px}
.dou{margin-left:4px}
.bell{margin-left:2px}
.more{font-weight:bold;font-size:13px;line-height:1}
.m-more{position:absolute;right:2px;top:4px}
.up{align-self:start;margin-top:4px}
.ar{width:0;height:0;border:3px solid transparent;border-top:4px solid #222;border-bottom:0;margin-left:3px;align-self:center}
.m-new .ar{margin-left:4px}
.m-user .ar{margin-left:3px}
.ar.gray{border-top-color:#aaa}
.sp{width:1px;height:20px;background:#bbb;align-self:center;margin-left:0}
.g{width:3px;height:15px;border-left:2px dotted #999;align-self:center}

/* toolbars */
.toolrow{display:flex;padding-top:1px}
.bar{display:grid;align-items:center;height:26px;background:linear-gradient(#fbfbfb,#f3f3f3);white-space:nowrap}
.bar-a{margin-left:2px;width:148px;padding-left:5px;grid-template-columns:21px 20px 16px 21px 8px 20px 27px 10px}
.bar-b{margin-left:2px;width:548px;padding-left:5px;grid-template-columns:52px 74px 64px 74px 76px 86px 68px 38px 11px}
.bar-c{margin-left:5px;width:661px;padding-left:3px;grid-template-columns:48px 15px 48px 12px 75px 75px 9px 51px 47px 17px 46px 15px 70px 11px 11px 69px 1fr 13px}
.sigma{width:16px;font:bold 14px/16px "Liberation Serif";text-align:center}
.off{color:#9a9a9a}
.wt{background:#fff}
.hl{background:#dfeefa;border:1px solid #1c80cc;height:26px;padding-left:3px}
.pl4{padding-left:4px}.pl5{padding-left:5px}.pl3{padding-left:3px}.pl1{padding-left:1px}
.bar .sp{height:18px}

.main{display:grid;grid-template-columns:239px 1123px;column-gap:4px;height:625px}

/* nav */
.nav{display:flex;flex-direction:column;gap:1px;padding:2px 0 3px;height:625px}
.nav-head{height:15px;background:#0055e6;color:#fff;font-size:13px;line-height:15px;display:flex;align-items:center}
.nav-head span{flex:1}
.nav-ic{width:11px;height:11px;margin-right:7px}
.nav-btn{height:22px;flex:none;margin:0 1px;border:1px solid #a8a8a8;border-left-color:#ccc;background:#efefef;text-align:center;line-height:20px;padding-top:1px}
.nav-panel{flex:1;margin:0 1px;display:flex;flex-direction:column;background:#efefef;border-top:2px solid #d8d8d8;min-height:0}
.nav-tools{height:25px;flex:none;display:flex;align-items:center;gap:4px;padding-left:6px;background:linear-gradient(#fafafa,#f0f0f0)}
.pm{width:18px;height:16px}
.tree{flex:1;margin:0 1px;background:#fff;border:1px solid #999;border-right-color:#aaa;padding-top:1px;min-height:0}
.grp{height:16px;display:flex;align-items:center;padding-left:6px;position:relative;white-space:nowrap}
.grp>span{margin-left:5px}
.chev{width:8px;height:8px;margin-left:1px;border-right:2px solid #aaa;border-bottom:2px solid #aaa;transform:rotate(-45deg) scale(.8)}
.chev.dn{border-color:#555;transform:rotate(45deg) scale(.8) translate(-1px,-1px)}
.stub{width:5px;margin-left:3px;border-top:1px dotted #777}
.kids{margin-left:12px;border-left:1px dotted #777}
.kid{height:16px;display:flex;align-items:center;padding-left:18px;white-space:nowrap;position:relative}
.elbow{width:12px;height:8px;align-self:flex-start;border-left:1px dotted #777;border-bottom:1px dotted #777}
.kid>.i{margin-right:3px}
.kid>span{padding:0 1px}
.sel{background:#dcdcdc;margin-left:-23px;padding-left:23px!important;padding-right:3px!important;line-height:16px;position:relative;z-index:0}
.kid:has(.sel) .i{position:relative;z-index:1}
.bk{margin:0 0 0 1px!important}
.bk2{margin-left:5px}
.new{background:#ffe21a;font-size:8px;line-height:8px;padding:0 1px;align-self:flex-start;margin-top:-1px;color:#222;font-weight:bold}
.mouse{position:absolute;left:36px;top:3px;width:11px;height:15px;z-index:1}
.dimi{margin-top:-8px}

/* work */
.work{display:grid;grid-template-rows:28px 28px 27px 27px 259px 29px 227px;min-width:0}
.barrow{display:flex;padding:1px 0 0 2px}
.barrow.lower{padding-top:2px}
.bar-edit{width:788px;padding-left:3px;grid-template-columns:6px 52px 4px 52px 51px 7px 51px 50px 6px 51px 51px 6px 51px 51px 49px 9px 46px 12px 52px 50px 7px 1fr}
.bar-sel1{width:563px;padding-left:3px;grid-template-columns:4px 60px 73px 73px 71px 8px 47px 74px 76px 1fr}
.bar-sel2{margin-left:3px;width:153px;padding-left:4px;grid-template-columns:8px 51px 45px 1fr 10px}
.bar-sel3{margin-left:4px;width:398px;padding-left:3px;grid-template-columns:6px 56px 9px 19px 56px 30px 18px 58px 27px 5px 18px 1fr 13px}
.combo{display:flex;align-items:center;justify-content:space-between;background:#fff;height:24px;padding:0 5px 0 2px;margin-right:2px}
.combo .ar{margin:0}
.lab{color:#888}
.spin{display:flex;align-items:center;justify-content:flex-end;gap:5px;height:22px;border:1px solid #777;background:#f3f3f3;color:#777;padding-right:2px;margin-right:1px}
.spinb{width:7px;display:flex;flex-direction:column;gap:7px}
.tri-u{width:0;height:0;border:3px solid transparent;border-bottom:3px solid #555;border-top:0}
.tri-d{width:0;height:0;border:3px solid transparent;border-top:3px solid #555;border-bottom:0}
.cbx{width:12px;height:12px;border:1px solid #888;background:#fff}
.barrow3{display:flex;padding-left:413px;align-items:center}
.tiny{width:8px;height:26px;background:#f8f8f8;display:flex;align-items:center;padding-left:1px}
.bar-draw{width:831px;padding-left:3px;grid-template-columns:5px 50px 14px 5px 41px 62px 6px 69px 14px 6px 76px 74px 87px 106px 17px 111px 70px 1fr}

/* canvas */
.canvas{position:relative;background:#000;overflow:hidden;height:259px}
.scene{display:block}
.scene path,.scene circle,.scene rect{shape-rendering:crispEdges}
.red-d path{fill:none;stroke:#880000;stroke-width:1}
.tan{fill:#9c8e86}
.h-sparse{fill:url(#sparse)}
.h-mid{fill:url(#mid)}
.h-dense{fill:url(#dense)}
.hole{fill:#000}
.ln-grey{fill:none;stroke:#6e6e6e;stroke-width:1}
.ln-grey2{fill:none;stroke:#666;stroke-width:1}
.ln-w{fill:none;stroke:#fff;stroke-width:2}
.ln-wd{fill:none;stroke:#fff;stroke-width:1.500;stroke-dasharray:1 3}
.ln-r{fill:none;stroke:#f00;stroke-width:1}
.ln-g{fill:none;stroke:#0a8a0a;stroke-width:1}
.ax{fill:#ddd;font:bold 13px "Liberation Sans"}
.axg{stroke:#0f0;stroke-width:3;fill:none}
.axr{stroke:#f00;stroke-width:3;fill:none}
.axz{stroke:#0a78f0;fill:none}
.rebar-panel{position:absolute;left:10px;top:5px;width:167px;height:177px;background:#fff;border:1px solid #666;display:flex;flex-direction:column}
.rp-title{height:31px;color:#a8a8a8;padding:8px 0 0 7px}
.rp-list{flex:1;margin:0 1px 1px 1px;border:2px solid #8c8c8c;padding:0 0 0 1px}
.rp-row{height:12px;line-height:12px;display:flex;align-items:center;gap:2px;color:#000;white-space:nowrap}
.ck{width:12px;height:12px;flex:none;border:1px solid #999;background:#fff;position:relative;margin-right:1px}
.ck::after{content:"";position:absolute;left:3px;top:0;width:4px;height:7px;border-right:1.500px solid #666;border-bottom:1.500px solid #666;transform:rotate(40deg)}

.snaprow{display:flex;padding:3px 0 0 2px}
.bar-snap1{width:211px;padding-left:1px;height:24px;grid-template-columns:4px 52px 75px 75px}
.bar-snap2{margin-left:1px;width:260px;padding-left:1px;height:24px;grid-template-columns:4px 51px 51px 51px 50px 1fr}
.snaprow .hl{height:24px}

/* table */
.tablearea{display:grid;grid-template-columns:12px 1fr;height:227px}
.strip{background-image:radial-gradient(#c4c4c4 1px,transparent 1.200px);background-size:4px 4px;background-position:1px 0;padding-top:3px;height:220px}
.closex{display:block;width:12px;height:12px}
.tablecol{padding:5px 2px 0 0;display:flex;flex-direction:column;min-width:0}
.bar-table{width:1104px;margin-left:1px;height:23px;padding-left:5px;grid-template-columns:27px 23px 23px 18px 9px 23px 20px 6px 51px 53px 74px 74px 75px 47px 13px 31px 9px 1fr}
.bar-table .sp{height:16px}
.tbox{margin-top:2px;height:196px;width:1109px;border:1px solid #a0a0a0;border-bottom-width:2px;display:grid;grid-template-columns:1fr 16px;grid-template-rows:176px 17px;background:#f0f0f0}
.tview{overflow:hidden;min-width:0;background:#ccffd6}
.tgrid{display:grid;width:1136px;grid-template-columns:33px 73px 57px 35px 33px 202px 166px 156px 60px 39px 39px 49px 60px 62px 72px;grid-template-rows:18px 41px 41px 34px 34px 34px}
.hc{background:linear-gradient(#fff,#ededed);border-right:1px solid #c0c0c0;border-bottom:1px solid #c0c0c0;text-align:center;line-height:17px;white-space:nowrap;overflow:hidden}
.hc.act{background:linear-gradient(#fde6bc,#f6bf6e);color:#6c1a80}
.rh{background:linear-gradient(#f2f2f2,#fff);border-right:1px solid #c0c0c0;border-bottom:1px solid #c0c0c0;display:flex;align-items:center;justify-content:center;padding-top:2px}
.c{background:#ccffd6;border-right:1px solid #c0c0c0;border-bottom:1px solid #c0c0c0;padding:2px 0 0 2px;display:flex;align-items:center;white-space:nowrap;overflow:hidden;color:#111}
.dia{border-left:1px solid #000}
.ctr{justify-content:center;padding:2px 0 0}
.lvl{text-decoration:underline;line-height:12px}
.fig{flex-direction:column;justify-content:center;padding:0}
.fig-n{color:#f00;line-height:12px}
.fig-l{width:150px;height:2px;background:#000;margin-top:1px}
.f{line-height:12px;padding-top:0}
.d{line-height:11px;display:block;padding-top:2px;overflow:visible}
.fig2{padding-left:57px;gap:8px}
.hoop{width:34px;height:23px;border:2px solid #000;border-radius:1px;position:relative;background:#ccffd6}
.hoop svg{position:absolute;right:0;top:0;width:14px;height:11px}
.hoop-n{position:absolute;left:0;bottom:0;color:#f00;line-height:12px}
.figtop{display:block;padding:6px 0 0 35px}
.fig-t{width:131px;height:2px;background:#000}
.vscroll{display:flex;flex-direction:column;align-items:center;background:#f0f0f0}
.sa{flex:none;width:7px;height:7px;border:solid #333;border-width:2px 0 0 2px}
.sa-u{transform:rotate(45deg);margin:5px 0 3px}
.sa-d{transform:rotate(225deg);margin:3px 0 5px}
.sa-l{transform:rotate(-45deg);margin:0 2px 0 6px}
.sa-r{transform:rotate(135deg);margin:0 6px 0 2px}
.vtrack{flex:1;width:16px;padding-top:65px}
.vthumb{height:48px;width:15px;background:#cdcdcd}
.hscroll{display:flex;align-items:center;background:#f0f0f0;height:17px}
.htrack{flex:1;height:16px;padding-left:3px}
.hthumb{width:701px;height:16px;background:#c8c8c8}
.corner{background:#f0f0f0}

/* status */
.status{display:grid;grid-template-columns:149px 80px 100px 49px 915px 70px;padding-top:1px;height:21px}
.st{background:linear-gradient(#fff,#f4f4f4);border:1px solid #ddd;margin-right:2px;height:19px;line-height:18px;padding-left:1px;white-space:nowrap;overflow:hidden;color:#111}
.st6{margin-right:0}

/* taskbar */
.taskbar{display:flex;background:#00070d;height:40px;color:#fff}
.start{width:48px;background:#000;display:flex;align-items:center;justify-content:center}
.win{width:16px;height:16px}
.search{width:344px;background:#333;display:flex;align-items:center;padding-left:9px;position:relative}
.cortana{width:20px;height:20px;border:3px solid #ddd;border-radius:50%;margin-right:7px;flex:none;transform:scale(.9)}
.ph{color:#8e8e8e;font-size:14px;white-space:nowrap}
.micro{position:absolute;left:315px;top:12px;width:16px;height:20px}
.apps{display:flex;margin-left:2px;height:40px}
.app-i{width:48px;height:40px;display:flex;align-items:center;justify-content:center;flex:none;position:relative}
.app-i svg{width:24px;height:24px}
.app-sp{margin-right:7px}
.app-i.open::after{content:"";position:absolute;left:3px;right:3px;bottom:0;height:2px;background:#76b9ed}
.app-i:nth-child(5){width:49px}
.app-i:nth-child(6),.app-i:nth-child(7){width:50px}
.cur-app{background:#2d3a40}
.cur-app.open::after{left:0;right:0}
.tray{position:relative;flex:1;height:40px}
.tr{position:absolute}
.t1{left:302px;top:17px;width:14px;height:8px}
.t2{left:322px;top:14px;width:18px;height:14px}
.t3{left:348px;top:13px;width:16px;height:16px}
.t4{left:371px;top:13px;width:16px;height:16px}
.tr-zh{position:absolute;left:396px;top:12px;color:#fff;font-size:14px;font-weight:bold}
.tr-s{position:absolute;left:424px;top:12px;width:16px;height:18px;background:#e9521c;border-radius:3px;color:#fff;font:bold 14px/18px "Liberation Sans";text-align:center}
.clock{position:absolute;left:456px;top:0;width:56px;height:40px;display:flex;flex-direction:column;align-items:center;justify-content:space-around;font-size:13px;color:#ddd;padding:3px 0}
.t5{left:534px;top:12px;width:17px;height:17px}
```
